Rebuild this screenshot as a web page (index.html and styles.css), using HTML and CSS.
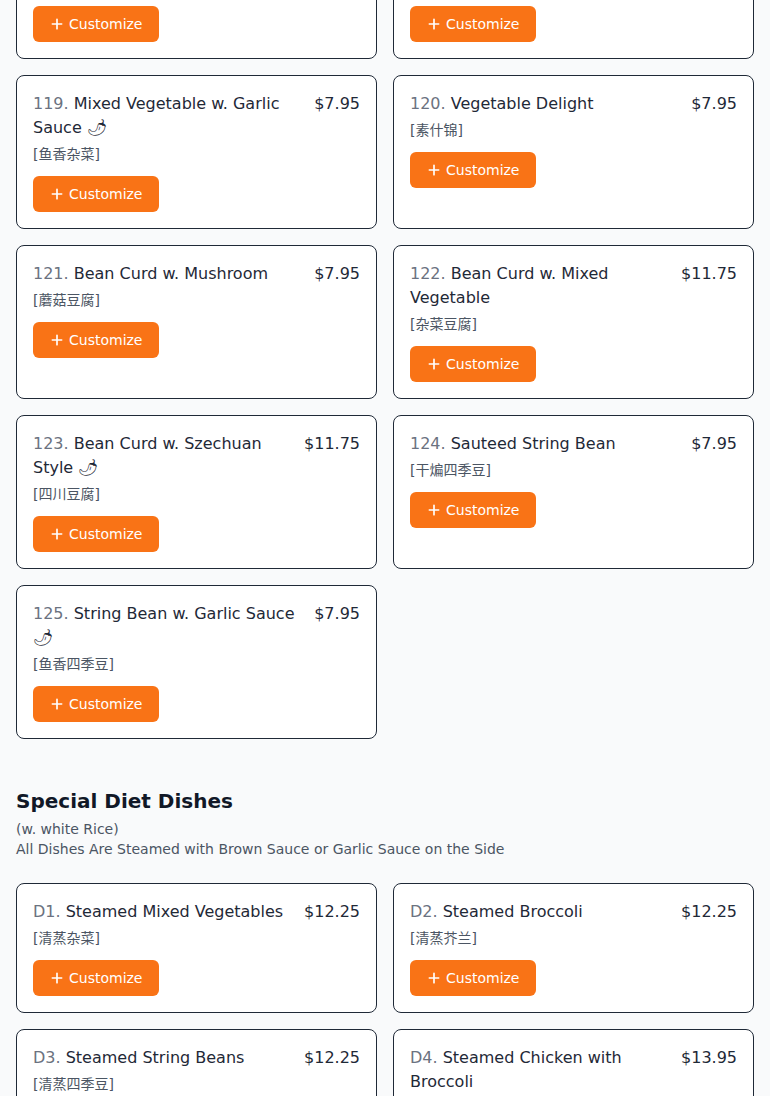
FILE: index.html
```html
<!DOCTYPE html>
<html lang="en">
<head>
<meta charset="utf-8">
<title>Menu</title>
<link rel="stylesheet" href="styles.css">
</head>
<body>
<main class="menu">
  <section class="section section-first">
    <div class="grid">
      <article class="card">
        <div class="card-head">
          <h3 class="dish"><span class="num">117.</span> Broccoli w. Garlic Sauce</h3>
          <span class="price">$7.95</span>
        </div>
        <p class="cn">[鱼香芥兰]</p>
        <button class="btn"><svg class="plus" viewBox="0 0 24 24" width="16" height="16"><path d="M12 5v14M5 12h14"/></svg>Customize</button>
      </article>
      <article class="card">
        <div class="card-head">
          <h3 class="dish"><span class="num">118.</span> Sauteed Broccoli</h3>
          <span class="price">$7.95</span>
        </div>
        <p class="cn">[清炒芥兰]</p>
        <button class="btn"><svg class="plus" viewBox="0 0 24 24" width="16" height="16"><path d="M12 5v14M5 12h14"/></svg>Customize</button>
      </article>

      <article class="card">
        <div class="card-head">
          <h3 class="dish"><span class="num">119.</span> Mixed Vegetable w. Garlic Sauce 🌶</h3>
          <span class="price">$7.95</span>
        </div>
        <p class="cn">[鱼香杂菜]</p>
        <button class="btn"><svg class="plus" viewBox="0 0 24 24" width="16" height="16"><path d="M12 5v14M5 12h14"/></svg>Customize</button>
      </article>
      <article class="card">
        <div class="card-head">
          <h3 class="dish"><span class="num">120.</span> Vegetable Delight</h3>
          <span class="price">$7.95</span>
        </div>
        <p class="cn">[素什锦]</p>
        <button class="btn"><svg class="plus" viewBox="0 0 24 24" width="16" height="16"><path d="M12 5v14M5 12h14"/></svg>Customize</button>
      </article>

      <article class="card">
        <div class="card-head">
          <h3 class="dish"><span class="num">121.</span> Bean Curd w. Mushroom</h3>
          <span class="price">$7.95</span>
        </div>
        <p class="cn">[蘑菇豆腐]</p>
        <button class="btn"><svg class="plus" viewBox="0 0 24 24" width="16" height="16"><path d="M12 5v14M5 12h14"/></svg>Customize</button>
      </article>
      <article class="card">
        <div class="card-head">
          <h3 class="dish"><span class="num">122.</span> Bean Curd w. Mixed Vegetable</h3>
          <span class="price">$11.75</span>
        </div>
        <p class="cn">[杂菜豆腐]</p>
        <button class="btn"><svg class="plus" viewBox="0 0 24 24" width="16" height="16"><path d="M12 5v14M5 12h14"/></svg>Customize</button>
      </article>

      <article class="card">
        <div class="card-head">
          <h3 class="dish"><span class="num">123.</span> Bean Curd w. Szechuan Style 🌶</h3>
          <span class="price">$11.75</span>
        </div>
        <p class="cn">[四川豆腐]</p>
        <button class="btn"><svg class="plus" viewBox="0 0 24 24" width="16" height="16"><path d="M12 5v14M5 12h14"/></svg>Customize</button>
      </article>
      <article class="card">
        <div class="card-head">
          <h3 class="dish"><span class="num">124.</span> Sauteed String Bean</h3>
          <span class="price">$7.95</span>
        </div>
        <p class="cn">[干煸四季豆]</p>
        <button class="btn"><svg class="plus" viewBox="0 0 24 24" width="16" height="16"><path d="M12 5v14M5 12h14"/></svg>Customize</button>
      </article>

      <article class="card">
        <div class="card-head">
          <h3 class="dish"><span class="num">125.</span> String Bean w. Garlic Sauce 🌶</h3>
          <span class="price">$7.95</span>
        </div>
        <p class="cn">[鱼香四季豆]</p>
        <button class="btn"><svg class="plus" viewBox="0 0 24 24" width="16" height="16"><path d="M12 5v14M5 12h14"/></svg>Customize</button>
      </article>
    </div>
  </section>

  <section class="section">
    <header class="section-head">
      <h2 class="section-title">Special Diet Dishes</h2>
      <p class="section-note">(w. white Rice)</p>
      <p class="section-note">All Dishes Are Steamed with Brown Sauce or Garlic Sauce on the Side</p>
    </header>
    <div class="grid">
      <article class="card">
        <div class="card-head">
          <h3 class="dish"><span class="num">D1.</span> Steamed Mixed Vegetables</h3>
          <span class="price">$12.25</span>
        </div>
        <p class="cn">[清蒸杂菜]</p>
        <button class="btn"><svg class="plus" viewBox="0 0 24 24" width="16" height="16"><path d="M12 5v14M5 12h14"/></svg>Customize</button>
      </article>
      <article class="card">
        <div class="card-head">
          <h3 class="dish"><span class="num">D2.</span> Steamed Broccoli</h3>
          <span class="price">$12.25</span>
        </div>
        <p class="cn">[清蒸芥兰]</p>
        <button class="btn"><svg class="plus" viewBox="0 0 24 24" width="16" height="16"><path d="M12 5v14M5 12h14"/></svg>Customize</button>
      </article>
      <article class="card">
        <div class="card-head">
          <h3 class="dish"><span class="num">D3.</span> Steamed String Beans</h3>
          <span class="price">$12.25</span>
        </div>
        <p class="cn">[清蒸四季豆]</p>
        <button class="btn"><svg class="plus" viewBox="0 0 24 24" width="16" height="16"><path d="M12 5v14M5 12h14"/></svg>Customize</button>
      </article>
      <article class="card">
        <div class="card-head">
          <h3 class="dish"><span class="num">D4.</span> Steamed Chicken with Broccoli</h3>
          <span class="price">$13.95</span>
        </div>
        <p class="cn">[清蒸芥兰鸡]</p>
        <button class="btn"><svg class="plus" viewBox="0 0 24 24" width="16" height="16"><path d="M12 5v14M5 12h14"/></svg>Customize</button>
      </article>
    </div>
  </section>
</main>
</body>
</html>
```

FILE: styles.css
```css
* { box-sizing: border-box; }

html, body {
  margin: 0;
  padding: 0;
  background: #f9fafb;
  font-family: "DejaVu Sans", "Noto Sans CJK SC", sans-serif;
  color: #1f2937;
}

.menu {
  padding: 0 16px 40px;
  margin-top: -71px;
}

.section + .section {
  margin-top: 48px;
}

.section-head {
  margin-bottom: 24px;
}

.section-title {
  margin: 0;
  font-size: 20px;
  line-height: 28px;
  font-weight: 700;
  color: #111827;
}

.section-note {
  margin: 0;
  font-size: 14px;
  line-height: 20px;
  color: #4b5563;
}

.section-note:first-of-type {
  margin-top: 4px;
}

.grid {
  display: grid;
  grid-template-columns: 1fr 1fr;
  gap: 16px;
}

.card {
  background: #ffffff;
  border: 1px solid #1f2937;
  border-radius: 8px;
  padding: 16px;
}

.card-head {
  display: flex;
  justify-content: space-between;
  align-items: flex-start;
  gap: 16px;
}

.dish {
  margin: 0;
  font-size: 16px;
  line-height: 24px;
  font-weight: 400;
  color: #1f2937;
}

.num {
  color: #6b7280;
}

.price {
  font-size: 16px;
  line-height: 24px;
  color: #1f2937;
  white-space: nowrap;
}

.cn {
  margin: 4px 0 0;
  font-size: 14px;
  line-height: 20px;
  color: #4b5563;
}

.btn {
  display: inline-flex;
  align-items: center;
  gap: 4px;
  margin-top: 12px;
  height: 36px;
  padding: 0 16px;
  border: none;
  border-radius: 6px;
  background: #f97316;
  color: #ffffff;
  font-family: "DejaVu Sans", sans-serif;
  font-size: 14px;
  line-height: 20px;
  cursor: pointer;
}

.plus {
  fill: none;
  stroke: #ffffff;
  stroke-width: 2.5;
  stroke-linecap: round;
}
```
